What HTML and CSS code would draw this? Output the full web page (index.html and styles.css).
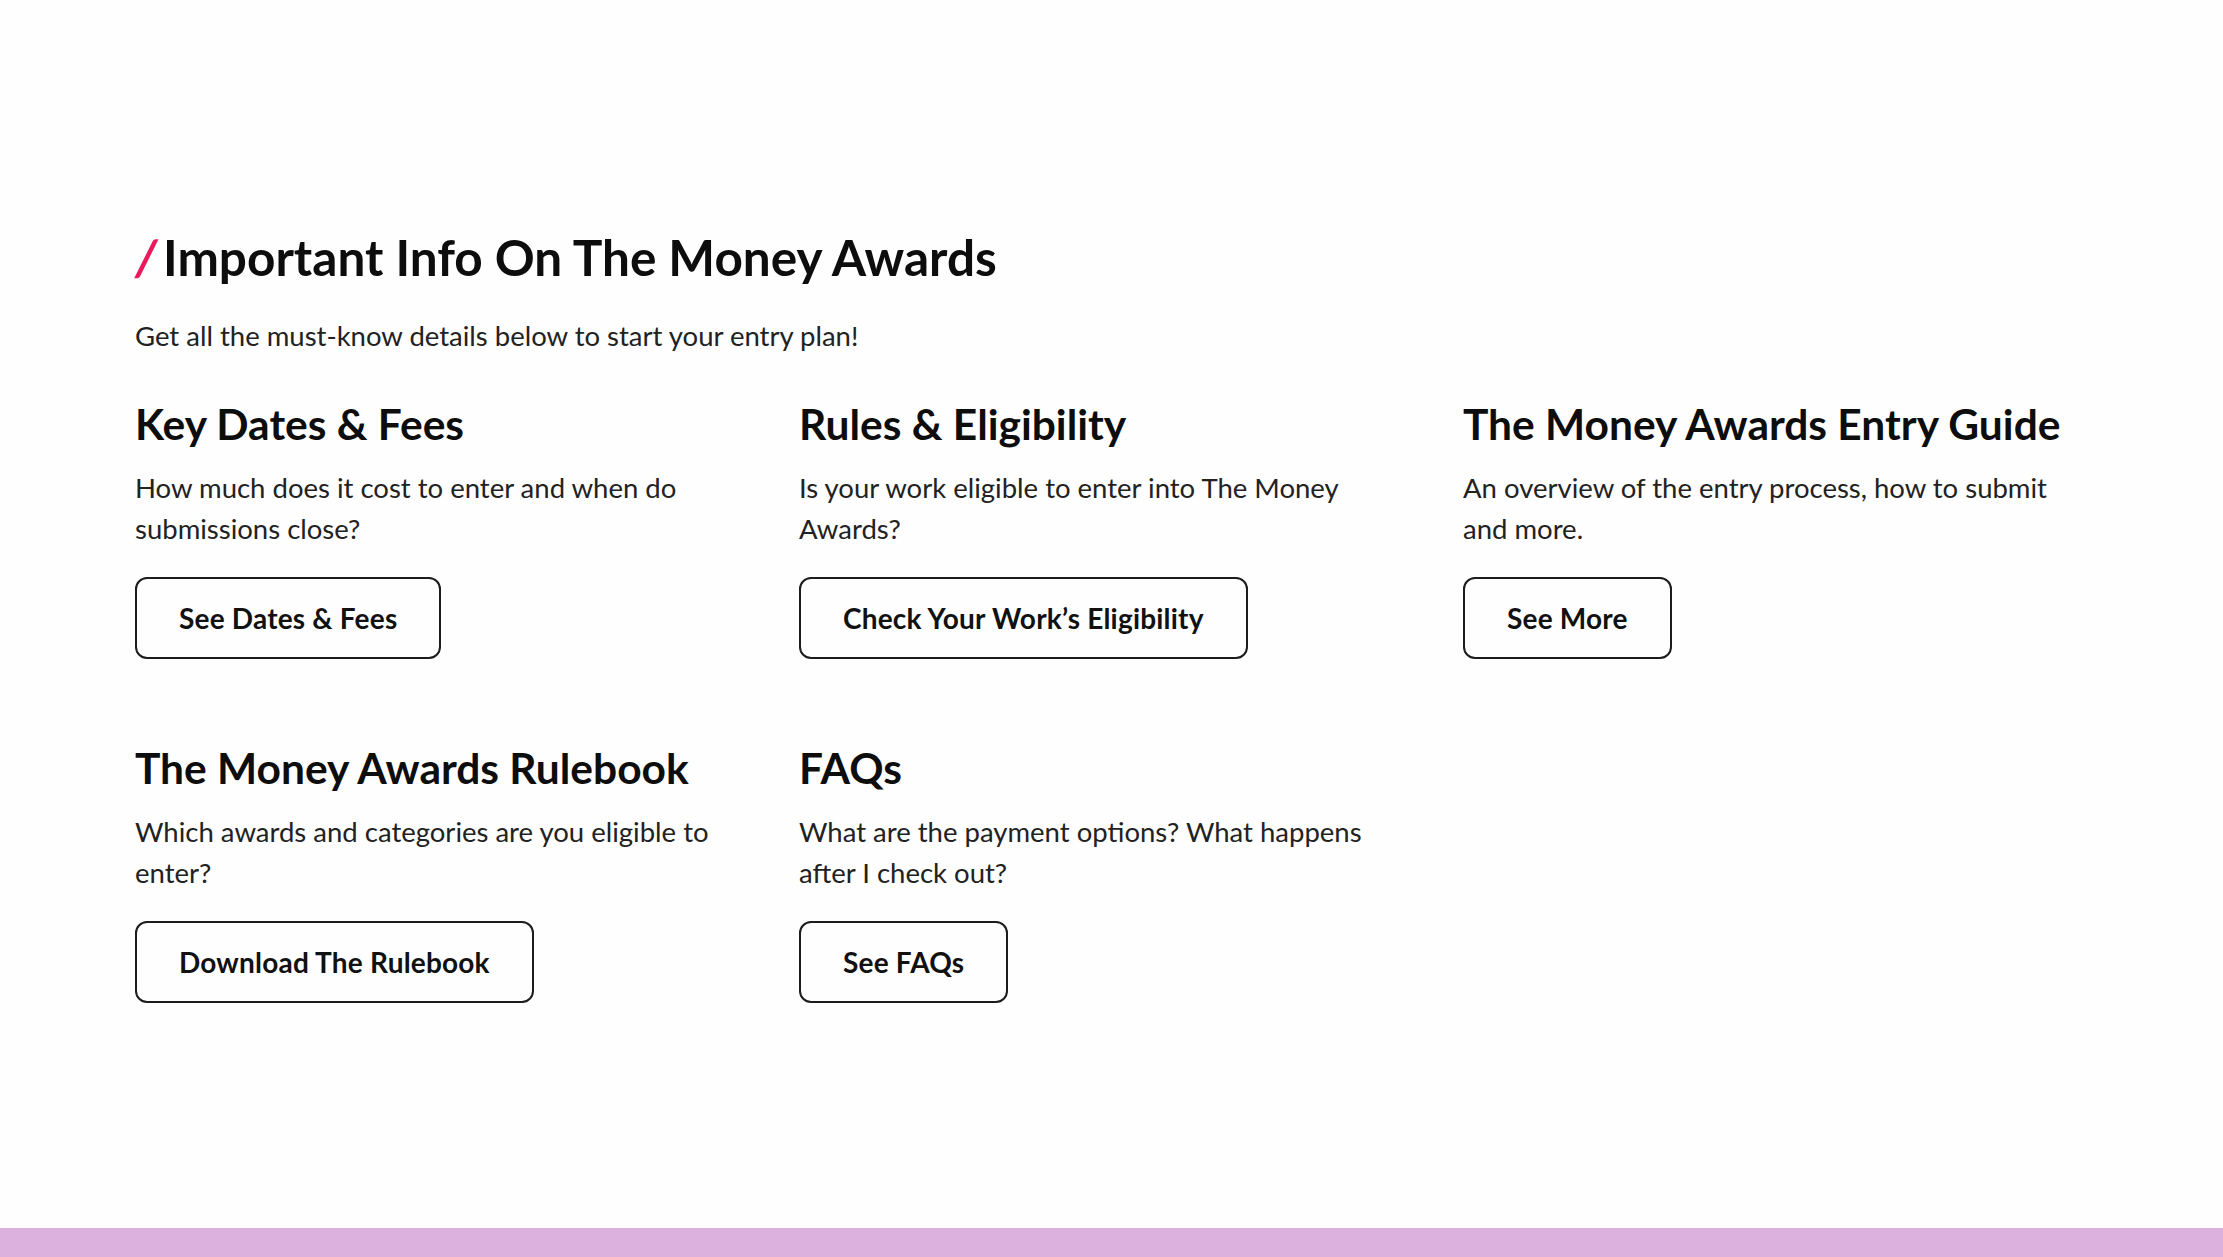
FILE: index.html
```html
<!DOCTYPE html>
<html lang="en">
<head>
<meta charset="utf-8">
<title>Important Info On The Money Awards</title>
<link rel="stylesheet" href="styles.css">
</head>
<body>
<main class="page">
  <section class="info">
    <h1 class="info-title"><span class="slash">/</span>Important Info On The Money Awards</h1>
    <p class="info-sub">Get all the must-know details below to start your entry plan!</p>
    <div class="info-grid">
      <div class="card">
        <h2 class="card-title">Key Dates &amp; Fees</h2>
        <p class="card-text">How much does it cost to enter and when do submissions close?</p>
        <a class="btn" href="#">See Dates &amp; Fees</a>
      </div>
      <div class="card">
        <h2 class="card-title">Rules &amp; Eligibility</h2>
        <p class="card-text">Is your work eligible to enter into The Money Awards?</p>
        <a class="btn" href="#">Check Your Work’s Eligibility</a>
      </div>
      <div class="card">
        <h2 class="card-title">The Money Awards Entry Guide</h2>
        <p class="card-text">An overview of the entry process, how to submit and more.</p>
        <a class="btn" href="#">See More</a>
      </div>
      <div class="card">
        <h2 class="card-title">The Money Awards Rulebook</h2>
        <p class="card-text">Which awards and categories are you eligible to enter?</p>
        <a class="btn" href="#">Download The Rulebook</a>
      </div>
      <div class="card">
        <h2 class="card-title">FAQs</h2>
        <p class="card-text">What are the payment options? What happens after I check out?</p>
        <a class="btn" href="#">See FAQs</a>
      </div>
    </div>
  </section>
  <footer class="footer-strip"></footer>
</main>
</body>
</html>
```
FILE: styles.css
```css
* { box-sizing: border-box; }
html, body { margin: 0; padding: 0; background: #fefefe; }
body {
  font-family: "Lato", "Liberation Sans", sans-serif;
  color: #1f1f1f;
}
.page {
  min-height: 1257px;
  display: flex;
  flex-direction: column;
}
.info {
  flex: 1;
  padding: 230px 135px 0 135px;
}
.info-title {
  margin: 0;
  font-size: 49.5px;
  line-height: 54px;
  font-weight: 700;
  color: #0d0d0d;
}
.slash {
  color: #ea1a5c;
  font-weight: 700;
  margin-right: 5px;
  display: inline-block;
  transform: skewX(-6deg);
}
.info-sub {
  margin: 31px 0 0 0;
  font-size: 27.5px;
  line-height: 41px;
  color: #222;
}
.info-grid {
  margin-top: 45px;
  display: grid;
  grid-template-columns: repeat(3, 625px);
  column-gap: 39px;
  row-gap: 86px;
}
.card { display: flex; flex-direction: column; align-items: flex-start; }
.card-title {
  margin: 0;
  font-size: 42.5px;
  line-height: 46px;
  font-weight: 700;
  color: #0d0d0d;
}
.card-text {
  margin: 20px 0 0 0;
  font-size: 27.5px;
  line-height: 41px;
  color: #222;
}
.btn {
  margin-top: 28px;
  height: 82px;
  padding: 0 42px;
  display: inline-flex;
  align-items: center;
  border: 2px solid #1c1c1c;
  border-radius: 12px;
  font-size: 28px;
  font-weight: 700;
  letter-spacing: 0.2px;
  color: #111;
  text-decoration: none;
  white-space: nowrap;
}
.footer-strip {
  height: 29px;
  background: #dcb1de;
}
```
